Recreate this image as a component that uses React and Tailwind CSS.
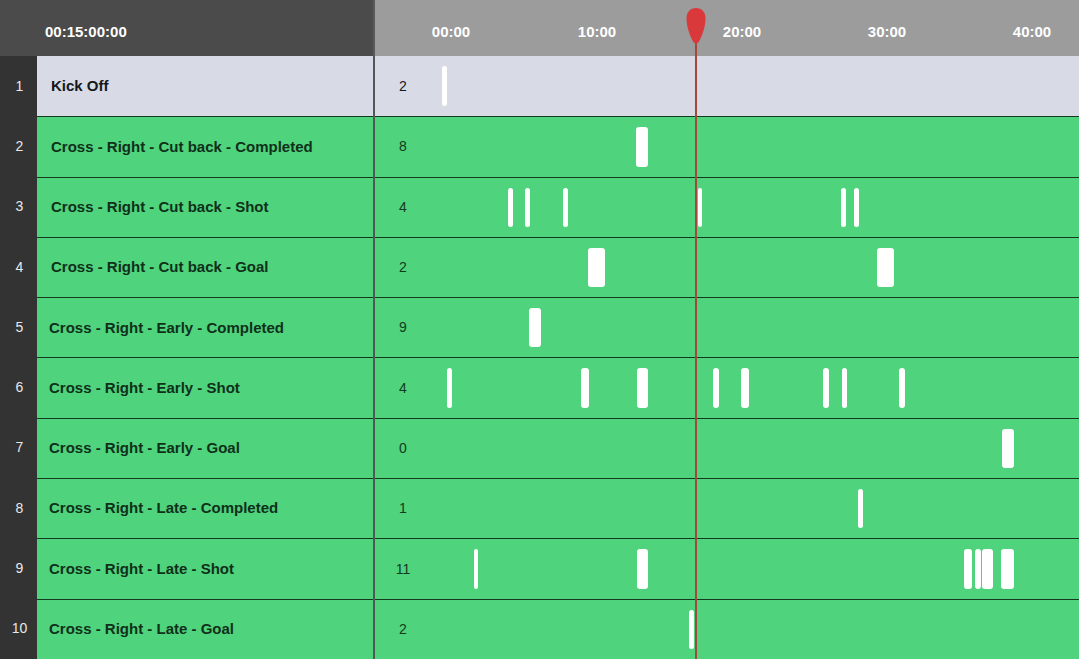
import React from 'react';

const rows = [
  { name: 'Kick Off', count: 2, kickoff: true, bars: [[67, 5]] },
  { name: 'Cross - Right - Cut back - Completed', count: 8, bars: [[261, 12]] },
  { name: 'Cross - Right - Cut back - Shot', count: 4, bars: [[133, 5], [150, 5], [188, 5], [323, 4], [466, 5], [479, 5]] },
  { name: 'Cross - Right - Cut back - Goal', count: 2, bars: [[213, 17], [502, 17]] },
  { name: 'Cross - Right - Early - Completed', count: 9, bars: [[154, 12]] },
  { name: 'Cross - Right - Early - Shot', count: 4, bars: [[72, 5], [206, 8], [262, 11], [338, 6], [366, 8], [448, 6], [467, 5], [524, 6]] },
  { name: 'Cross - Right - Early - Goal', count: 0, bars: [[627, 12]] },
  { name: 'Cross - Right - Late - Completed', count: 1, bars: [[483, 5]] },
  { name: 'Cross - Right - Late - Shot', count: 11, bars: [[99, 4], [262, 11], [589, 8], [600, 6], [607, 11], [626, 13]] },
  { name: 'Cross - Right - Late - Goal', count: 2, bars: [[314, 5]] },
];

// tick labels, centre offset from the start of the timeline column
const ticks = [
  ['00:00', 76],
  ['10:00', 222],
  ['20:00', 367],
  ['30:00', 512],
  ['40:00', 657],
];

const Playhead = () => (
  <div className="absolute top-0 bottom-0 left-[685px] w-[22px] pointer-events-none">
    <div className="absolute top-[42px] bottom-0 left-[10px] w-[2px] bg-[#a4493a]" />
    <svg width="22" height="40" viewBox="0 0 22 40" className="absolute top-[6px] left-0">
      <path
        d="M11 2 C 16.5 2, 20.5 6, 20.5 12 C 20.5 21, 17 30, 14 35.5 Q 11 39.5, 8 35.5 C 5 30, 1.5 21, 1.5 12 C 1.5 6, 5.5 2, 11 2 Z"
        fill="#d9393b"
      />
    </svg>
  </div>
);

const App = () => {
  return (
    <div className="relative w-[1079px] h-[659px] flex flex-col overflow-hidden font-['Liberation_Sans',Arial,sans-serif]">
      {/* header */}
      <div className="h-[56px] flex shrink-0">
        <div className="w-[373px] bg-[#4b4b4b] pl-[45px] pt-[23px] text-[15px] font-bold text-white leading-[18px]">
          00:15:00:00
        </div>
        <div className="w-[2px] bg-[#5a5a5a]" />
        <div className="relative flex-1 bg-[#9c9c9c]">
          {ticks.map(([label, x]) => (
            <span
              key={label}
              className="absolute top-[23px] -translate-x-1/2 text-[15px] font-bold text-white leading-[18px]"
              style={{ left: x }}
            >
              {label}
            </span>
          ))}
        </div>
      </div>

      {/* rows */}
      <div className="flex-1 flex flex-col">
        {rows.map((row, i) => (
          <div key={row.name} className="flex-1 flex">
            <div className="w-[37px] bg-[#333333] flex items-center justify-center pl-[2px] text-[14px] text-[#e8e8e8]">
              {i + 1}
            </div>
            <div
              className={`w-[336px] flex items-center text-[15px] font-bold ${
                i === 0 ? 'bg-[#d8dbe5] text-[#141820]' : 'bg-[#4fd37c] text-[#10301a] border-t border-[#163a20]'
              } ${i < 4 ? 'pl-[14px]' : 'pl-[12px]'}`}
            >
              {row.name}
            </div>
            <div className="w-[2px] bg-[#4e5a52]" />
            <div
              className={`relative flex-1 flex items-center ${
                i === 0 ? 'bg-[#d8dbe5]' : 'bg-[#4fd37c] border-t border-[#163a20]'
              }`}
            >
              <span className={`w-[56px] text-center text-[14px] ${i === 0 ? 'text-[#141820]' : 'text-[#123a1c]'}`}>
                {row.count}
              </span>
              {row.bars.map(([x, w], j) => (
                <div
                  key={j}
                  className="absolute top-[10px] bottom-[10px] bg-white rounded-[3px]"
                  style={{ left: x, width: w }}
                />
              ))}
            </div>
          </div>
        ))}
      </div>

      <Playhead />
    </div>
  );
};

export default App;
